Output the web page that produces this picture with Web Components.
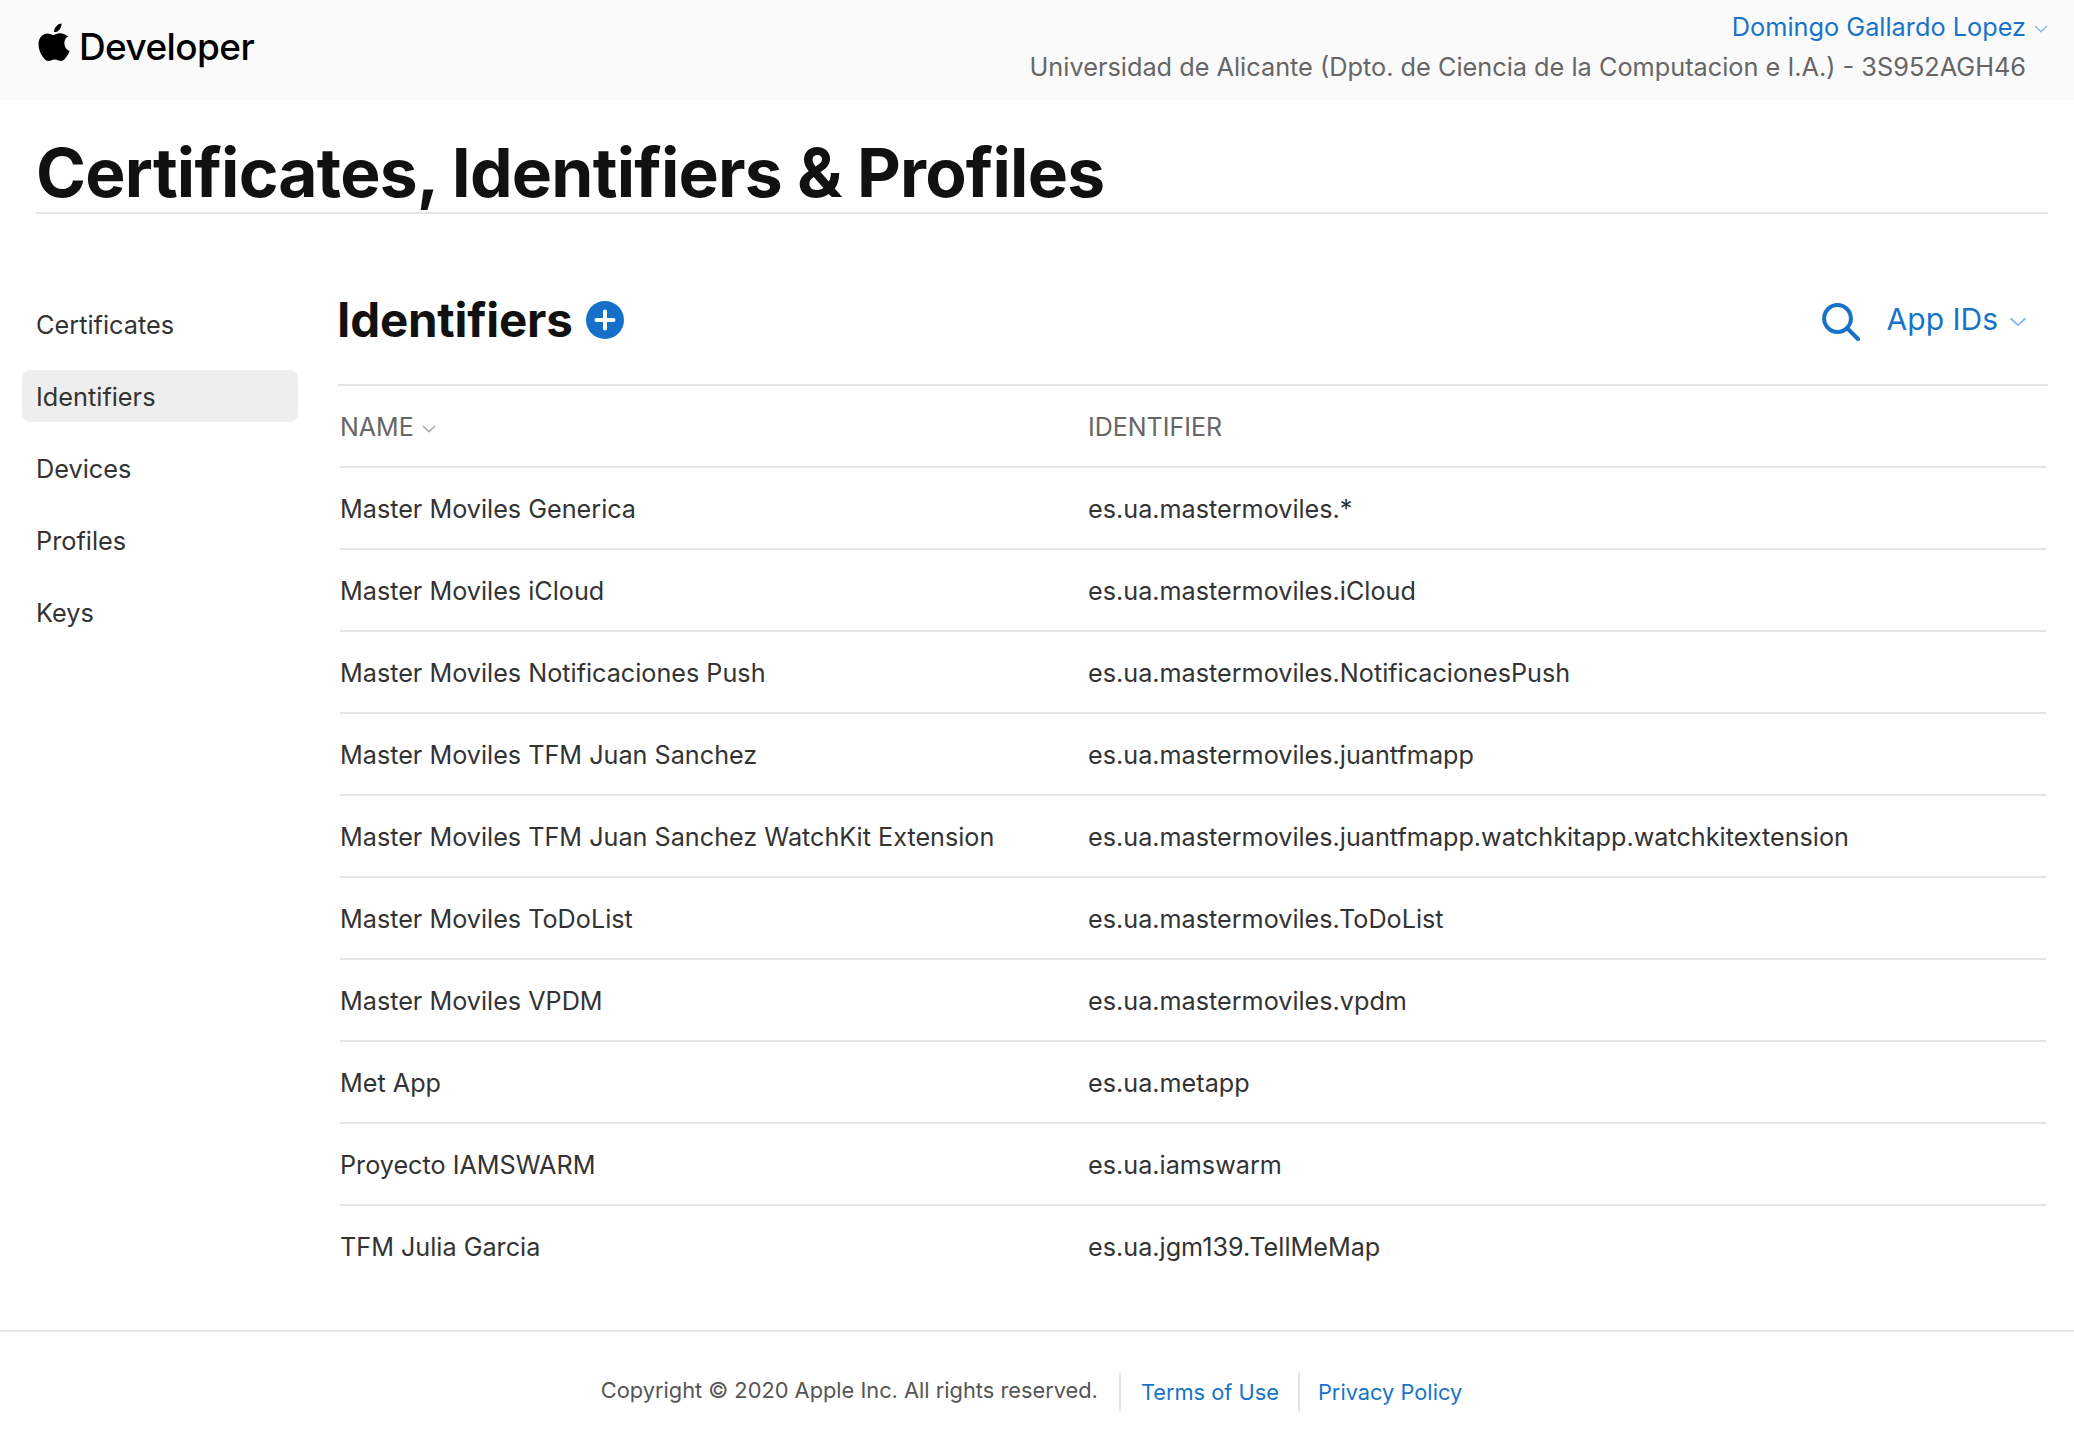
<!DOCTYPE html>
<html>
<head>
<meta charset="utf-8">
<title>Certificates, Identifiers & Profiles</title>
<style>
    html, body { margin: 0; padding: 0; background: #fff; }
    body { font-family: Inter, "Liberation Sans", sans-serif; color: #333; }
</style>
</head>
<body>
<dev-header></dev-header>
<page-title>Certificates, Identifiers &amp; Profiles</page-title>
<main-layout>
    <side-nav slot="nav">
        <nav-item>Certificates</nav-item>
        <nav-item active>Identifiers</nav-item>
        <nav-item>Devices</nav-item>
        <nav-item>Profiles</nav-item>
        <nav-item>Keys</nav-item>
    </side-nav>
    <identifier-list slot="content">
        <identifier-row name="Master Moviles Generica" identifier="es.ua.mastermoviles.*"></identifier-row>
        <identifier-row name="Master Moviles iCloud" identifier="es.ua.mastermoviles.iCloud"></identifier-row>
        <identifier-row name="Master Moviles Notificaciones Push" identifier="es.ua.mastermoviles.NotificacionesPush"></identifier-row>
        <identifier-row name="Master Moviles TFM Juan Sanchez" identifier="es.ua.mastermoviles.juantfmapp"></identifier-row>
        <identifier-row name="Master Moviles TFM Juan Sanchez WatchKit Extension" identifier="es.ua.mastermoviles.juantfmapp.watchkitapp.watchkitextension"></identifier-row>
        <identifier-row name="Master Moviles ToDoList" identifier="es.ua.mastermoviles.ToDoList"></identifier-row>
        <identifier-row name="Master Moviles VPDM" identifier="es.ua.mastermoviles.vpdm"></identifier-row>
        <identifier-row name="Met App" identifier="es.ua.metapp"></identifier-row>
        <identifier-row name="Proyecto IAMSWARM" identifier="es.ua.iamswarm"></identifier-row>
        <identifier-row name="TFM Julia Garcia" identifier="es.ua.jgm139.TellMeMap"></identifier-row>
    </identifier-list>
</main-layout>
<page-footer></page-footer>

<script>
// every component is a template string plus a small class, same shape for all
function define(tag, html, extra) {
    var tpl = document.createElement('template');
    tpl.innerHTML = html;
    customElements.define(tag, class extends HTMLElement {
        constructor() {
            super();
            this.shadowDOM = this.attachShadow({ mode: 'open' });
            this.shadowDOM.appendChild(tpl.content.cloneNode(true));
        }
        connectedCallback() {
            if (extra) extra.call(this);
        }
    });
}

var chevron = '<svg class="chev" width="14" height="8" viewBox="0 0 14 8" fill="none"><path d="M1 1l6 5.6L13 1" stroke="currentColor" stroke-width="1.5"/></svg>';

define('dev-header', `
<style>
    :host { display: flex; justify-content: space-between; height: 100px; background: #fafafa; padding: 0 26px 0 38px; box-sizing: border-box; }
    .logo { display: flex; align-items: center; height: 92px; color: #000; font-size: 37px; font-weight: 500; letter-spacing: -0.6px; }
    .logo svg { margin-right: 9px; margin-top: -8px; }
    .who { display: flex; flex-direction: column; align-items: flex-end; padding-top: 9px; font-size: 25.3px; }
    .user { color: #1873c8; height: 36px; line-height: 36px; display: flex; align-items: center; }
    .chev { margin-left: 8px; color: #8dbbe6; margin-top: 4px; }
    .team { color: #666; height: 44px; line-height: 44px; margin-right: 22px; }
</style>
<div class="logo">
    <svg width="32" height="38" viewBox="0 0 814 1000"><path fill="#000" d="M788 341c-6 4-108 62-108 190 0 149 130 201 134 203-1 3-21 72-69 142-43 62-88 124-156 124s-86-40-165-40c-77 0-104 41-166 41s-106-57-156-127C44 792 0 671 0 556 0 372 120 274 238 274c63 0 115 41 154 41 38 0 97-44 168-44 27 0 124 3 188 70zM554 169c30-35 51-84 51-133 0-7-1-14-2-20-48 2-106 32-141 73-27 31-53 80-53 130 0 8 1 15 2 18 3 1 8 1 13 1 43 0 98-29 130-69z"/></svg>
    <span>Developer</span>
</div>
<div class="who">
    <div class="user">Domingo Gallardo Lopez${chevron}</div>
    <div class="team">Universidad de Alicante (Dpto. de Ciencia de la Computacion e I.A.) - 3S952AGH46</div>
</div>
`);

define('page-title', `
<style>
    :host { display: block; margin: 0 26px 0 36px; height: 114px; padding-top: 33px; box-sizing: border-box; border-bottom: 2px solid #e5e5e5; color: #111; font-size: 67.7px; font-weight: 700; line-height: 79px; letter-spacing: -0.8px; }
</style>
<slot></slot>
`);

define('main-layout', `
<style>
    :host { display: grid; grid-template-columns: 338px 1fr; margin-top: 64px; padding-right: 26px; }
</style>
<slot name="nav"></slot>
<slot name="content"></slot>
`);

define('side-nav', `
<style>
    :host { display: flex; flex-direction: column; gap: 20px; padding: 20px 0 0 22px; width: 276px; }
</style>
<slot></slot>
`);

define('nav-item', `
<style>
    :host { display: block; height: 52px; line-height: 54px; padding-left: 14px; border-radius: 8px; color: #333; font-size: 25.3px; }
    :host([active]) { background: #eeeeee; }
</style>
<slot></slot>
`);

define('identifier-list', `
<style>
    :host { display: block; }
    .top { display: flex; align-items: center; justify-content: space-between; height: 108px; box-sizing: border-box; border-bottom: 2px solid #e5e5e5; padding-bottom: 22px; }
    .left { display: flex; align-items: center; }
    h2 { margin: -2px 0 0 -1px; color: #111; font-size: 47.5px; font-weight: 700; letter-spacing: -0.2px; }
    .add { margin-left: 13px; }
    .right { display: flex; align-items: center; color: #1873c8; font-size: 30px; padding-right: 21px; }
    .right span { margin-top: -2px; }
    .right .chev { color: #8dbbe6; margin-left: 11px; margin-top: 4px; width: 18px; height: 10px; }
    .search { margin-right: 27px; margin-top: 4px; }
    .head { display: grid; grid-template-columns: 748px 1fr; height: 78px; padding-top: 2px; margin: 0 2px; align-items: center; border-bottom: 2px solid #e5e5e5; color: #666; font-size: 25px; }
    .name { display: flex; align-items: center; }
    .name .chev { color: #aaa; margin-left: 8px; margin-top: 4px; }
</style>
<div class="top">
    <div class="left">
        <h2>Identifiers</h2>
        <svg class="add" width="38" height="38" viewBox="0 0 38 38"><circle cx="19" cy="19" r="19" fill="#1470c8"/><path d="M19 10.5v17M10.5 19h17" stroke="#fff" stroke-width="4" stroke-linecap="round"/></svg>
    </div>
    <div class="right">
        <svg class="search" width="38" height="38" viewBox="0 0 38 38" fill="none" stroke="#1873c8" stroke-width="4" stroke-linecap="round"><circle cx="15.5" cy="15.5" r="13.4"/><path d="M25.5 25.5l10.5 10.5"/></svg>
        <span>App IDs</span>${chevron}
    </div>
</div>
<div class="head">
    <div class="name">NAME${chevron}</div>
    <div>IDENTIFIER</div>
</div>
<slot></slot>
`);

define('identifier-row', `
<style>
    :host { display: grid; grid-template-columns: 748px 1fr; height: 82px; padding-top: 2px; box-sizing: border-box; margin: 0 2px; align-items: center; color: #333; font-size: 25.2px; border-bottom: 2px solid #e5e5e5; }
    :host(:last-child) { border-bottom-color: transparent; }
</style>
<div class="n"></div>
<div class="i"></div>
`, function () {
    this.shadowDOM.querySelector('.n').textContent = this.getAttribute('name');
    this.shadowDOM.querySelector('.i').textContent = this.getAttribute('identifier');
});

define('page-footer', `
<style>
    :host { display: flex; justify-content: center; align-items: center; margin-top: 42px; height: 104px; padding: 8px 0 0 10px; border-top: 2px solid #e5e5e5; font-size: 21.8px; color: #555; }
    .c { padding-right: 21px; margin-top: -4px; }
    a { display: flex; align-items: center; height: 40px; padding: 0 19px 0 20px; color: #1873c8; text-decoration: none; border-left: 2px solid #e5e5e5; }
    a + a { padding: 0 21px 0 18px; }
</style>
<span class="c">Copyright © 2020 Apple Inc. All rights reserved.</span>
<a href="#">Terms of Use</a>
<a href="#">Privacy Policy</a>
`);
</script>
</body>
</html>
